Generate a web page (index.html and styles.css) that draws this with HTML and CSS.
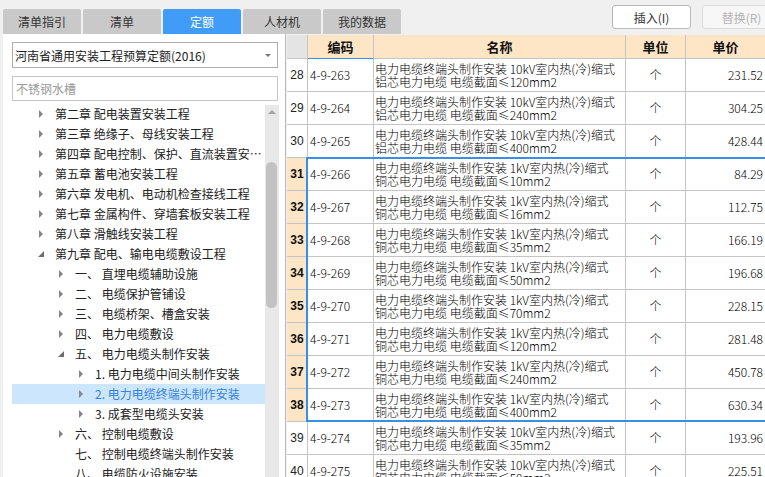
FILE: index.html
```html
<!DOCTYPE html>
<html lang="zh-CN">
<head>
<meta charset="utf-8">
<title>定额</title>
<link rel="stylesheet" href="styles.css">
</head>
<body>
<div class="app">
  <header class="topbar">
    <nav class="tabs">
      <div class="tab">清单指引</div>
      <div class="tab">清单</div>
      <div class="tab active">定额</div>
      <div class="tab">人材机</div>
      <div class="tab">我的数据</div>
    </nav>
    <div class="actions">
      <button class="btn">插入(I)</button>
      <button class="btn disabled">替换(R)</button>
    </div>
  </header>
  <main class="main">
    <aside class="left">
      <div class="select"><span class="select-text">河南省通用安装工程预算定额(2016)</span><i class="caret"></i></div>
      <div class="search">不锈钢水槽</div>
      <div class="treewrap">
        <ul class="tree">
          <li class="node l1"><i class="arr closed"></i><span class="label">第二章 配电装置安装工程</span></li>
          <li class="node l1"><i class="arr closed"></i><span class="label">第三章 绝缘子、母线安装工程</span></li>
          <li class="node l1"><i class="arr closed"></i><span class="label">第四章 配电控制、保护、直流装置安装工程</span></li>
          <li class="node l1"><i class="arr closed"></i><span class="label">第五章 蓄电池安装工程</span></li>
          <li class="node l1"><i class="arr closed"></i><span class="label">第六章 发电机、电动机检查接线工程</span></li>
          <li class="node l1"><i class="arr closed"></i><span class="label">第七章 金属构件、穿墙套板安装工程</span></li>
          <li class="node l1"><i class="arr closed"></i><span class="label">第八章 滑触线安装工程</span></li>
          <li class="node l1"><i class="arr open"></i><span class="label">第九章 配电、输电电缆敷设工程</span></li>
          <li class="node l2"><i class="arr closed"></i><span class="label">一、 直埋电缆辅助设施</span></li>
          <li class="node l2"><i class="arr closed"></i><span class="label">二、 电缆保护管铺设</span></li>
          <li class="node l2"><i class="arr closed"></i><span class="label">三、 电缆桥架、槽盒安装</span></li>
          <li class="node l2"><i class="arr closed"></i><span class="label">四、 电力电缆敷设</span></li>
          <li class="node l2"><i class="arr open"></i><span class="label">五、 电力电缆头制作安装</span></li>
          <li class="node l3"><i class="arr closed"></i><span class="label">1. 电力电缆中间头制作安装</span></li>
          <li class="node l3 selected"><i class="arr closed"></i><span class="label">2. 电力电缆终端头制作安装</span></li>
          <li class="node l3"><i class="arr closed"></i><span class="label">3. 成套型电缆头安装</span></li>
          <li class="node l2"><i class="arr closed"></i><span class="label">六、 控制电缆敷设</span></li>
          <li class="node l2"><i class="arr"></i><span class="label">七、 控制电缆终端头制作安装</span></li>
          <li class="node l2"><i class="arr"></i><span class="label">八、 电缆防火设施安装</span></li>
        </ul>
        <div class="vscroll"><div class="up"><i></i></div><div class="thumb"></div></div>
      </div>
    </aside>
    <section class="gridwrap">
      <div class="grid">
        <div class="c hd num"></div><div class="c hd hsel">编码</div><div class="c hd">名称</div><div class="c hd">单位</div><div class="c hd">单价</div>

        <div class="c n">28</div><div class="c code">4-9-263</div><div class="c name"><span>电力电缆终端头制作安装 10kV室内热(冷)缩式</span><span>铝芯电力电缆 电缆截面≤120mm2</span></div><div class="c unit">个</div><div class="c price">231.52</div>
        <div class="c n">29</div><div class="c code">4-9-264</div><div class="c name"><span>电力电缆终端头制作安装 10kV室内热(冷)缩式</span><span>铝芯电力电缆 电缆截面≤240mm2</span></div><div class="c unit">个</div><div class="c price">304.25</div>
        <div class="c n">30</div><div class="c code">4-9-265</div><div class="c name"><span>电力电缆终端头制作安装 10kV室内热(冷)缩式</span><span>铝芯电力电缆 电缆截面≤400mm2</span></div><div class="c unit">个</div><div class="c price">428.44</div>
        <div class="c n hl">31</div><div class="c code">4-9-266</div><div class="c name"><span>电力电缆终端头制作安装 1kV室内热(冷)缩式</span><span>铜芯电力电缆 电缆截面≤10mm2</span></div><div class="c unit">个</div><div class="c price">84.29</div>
        <div class="c n hl">32</div><div class="c code">4-9-267</div><div class="c name"><span>电力电缆终端头制作安装 1kV室内热(冷)缩式</span><span>铜芯电力电缆 电缆截面≤16mm2</span></div><div class="c unit">个</div><div class="c price">112.75</div>
        <div class="c n hl">33</div><div class="c code">4-9-268</div><div class="c name"><span>电力电缆终端头制作安装 1kV室内热(冷)缩式</span><span>铜芯电力电缆 电缆截面≤35mm2</span></div><div class="c unit">个</div><div class="c price">166.19</div>
        <div class="c n hl">34</div><div class="c code">4-9-269</div><div class="c name"><span>电力电缆终端头制作安装 1kV室内热(冷)缩式</span><span>铜芯电力电缆 电缆截面≤50mm2</span></div><div class="c unit">个</div><div class="c price">196.68</div>
        <div class="c n hl">35</div><div class="c code">4-9-270</div><div class="c name"><span>电力电缆终端头制作安装 1kV室内热(冷)缩式</span><span>铜芯电力电缆 电缆截面≤70mm2</span></div><div class="c unit">个</div><div class="c price">228.15</div>
        <div class="c n hl">36</div><div class="c code">4-9-271</div><div class="c name"><span>电力电缆终端头制作安装 1kV室内热(冷)缩式</span><span>铜芯电力电缆 电缆截面≤120mm2</span></div><div class="c unit">个</div><div class="c price">281.48</div>
        <div class="c n hl">37</div><div class="c code">4-9-272</div><div class="c name"><span>电力电缆终端头制作安装 1kV室内热(冷)缩式</span><span>铜芯电力电缆 电缆截面≤240mm2</span></div><div class="c unit">个</div><div class="c price">450.78</div>
        <div class="c n hl">38</div><div class="c code">4-9-273</div><div class="c name"><span>电力电缆终端头制作安装 1kV室内热(冷)缩式</span><span>铜芯电力电缆 电缆截面≤400mm2</span></div><div class="c unit">个</div><div class="c price">630.34</div>
        <div class="c n">39</div><div class="c code">4-9-274</div><div class="c name"><span>电力电缆终端头制作安装 10kV室内热(冷)缩式</span><span>铜芯电力电缆 电缆截面≤35mm2</span></div><div class="c unit">个</div><div class="c price">193.96</div>
        <div class="c n">40</div><div class="c code">4-9-275</div><div class="c name"><span>电力电缆终端头制作安装 10kV室内热(冷)缩式</span><span>铜芯电力电缆 电缆截面≤50mm2</span></div><div class="c unit">个</div><div class="c price">225.51</div>
      </div>
      <div class="selection"></div>
    </section>
  </main>
</div>
</body>
</html>
```

FILE: styles.css
```css
* { box-sizing: border-box; }
html, body { margin: 0; padding: 0; }
body {
  width: 765px;
  height: 477px;
  overflow: hidden;
  background: #f0f0f0;
  font-family: "Noto Sans CJK SC", "Microsoft YaHei", sans-serif;
  color: #333;
}
.app { display: flex; flex-direction: column; width: 765px; height: 477px; }

/* top bar */
.topbar { display: flex; align-items: flex-start; height: 34px; flex: none; }
.tabs { display: flex; gap: 2px; margin: 9px 0 0 3px; }
.tab {
  width: 78px; height: 25px;
  background: #c9c9c9;
  border-radius: 2px 2px 0 0;
  font-size: 12px; line-height: 25px;
  text-align: center; color: #333;
}
.tab.active { background: #409cf7; color: #fff; }
.actions { display: flex; gap: 11px; margin: 5px -16px 0 auto; }
.btn {
  width: 79px; height: 24px;
  background: #fff;
  border: 1px solid #b9b9b9;
  border-radius: 3px;
  font-family: "Noto Sans CJK SC", sans-serif;
  font-size: 12px; color: #333;
  padding: 0;
}
.btn.disabled { background: #f7f7f7; border-color: #dadada; color: #b4b4b4; }

/* main */
.main { display: flex; flex: 1; min-height: 0; }
.left {
  width: 283px; margin-left: 3px;
  background: #fff;
  border-right: 1px solid #b8b8b8;
  padding: 8px 0 0 9px;
  display: flex; flex-direction: column;
  flex: none;
}
.select {
  width: 266px; height: 26px;
  border: 1px solid #adadad;
  display: flex; align-items: center; justify-content: space-between;
  padding: 0 6px 0 2px;
  font-size: 12px; color: #222;
}
.caret {
  width: 0; height: 0;
  border-left: 3px solid transparent; border-right: 3px solid transparent;
  border-top: 3px solid #777;
}
.search {
  width: 266px; height: 25px; margin-top: 8px;
  border: 1px solid #c6c6c6;
  padding-left: 3px;
  font-size: 12px; line-height: 23px; color: #9a9a9a;
}
.treewrap { display: flex; margin-top: 3px; flex: 1; min-height: 0; overflow: hidden; }
.tree { list-style: none; margin: 0; padding: 0; width: 253px; flex: none; }
.node {
  height: 20px; display: flex; align-items: center;
  font-size: 12px; line-height: 18px; color: #222; white-space: nowrap;
}
.node.l1 { padding-left: 27px; }
.node.l2 { padding-left: 47px; }
.node.l3 { padding-left: 67px; }
.node.selected { background: #cce6fd; color: #3582d8; }
.arr { width: 16px; flex: none; height: 8px; position: relative; }
.arr.closed::before {
  content: ""; position: absolute; left: 0; top: 0;
  border-left: 4px solid #858585;
  border-top: 4px solid transparent; border-bottom: 4px solid transparent;
}
.arr.open::before {
  content: ""; position: absolute; left: -1px; top: 1px;
  border-bottom: 6px solid #6e6e6e;
  border-left: 6px solid transparent;
}
.label { overflow: hidden; text-overflow: ellipsis; padding-right: 2px; }
.vscroll { width: 14px; flex: none; background: #e8e8e8; margin-top: 1px; }
.up { height: 16px; display: flex; justify-content: center; padding-top: 5px; }
.up i {
  width: 0; height: 0;
  border-left: 4px solid transparent; border-right: 4px solid transparent;
  border-bottom: 4px solid #a2a2a2;
}
.thumb {
  width: 11px; height: 146px; margin: 41px 0 0 1px;
  background: #c2c2c2; border-radius: 6px;
}

/* grid */
.gridwrap {
  position: relative;
  margin: 1px 0 0 1px;
  width: 478px; flex: none;
  overflow: hidden;
  background: #c4c4c4;
}
.grid {
  display: grid;
  grid-template-columns: 20px 65px 251px 59px 79px;
  grid-template-rows: 23px;
  grid-auto-rows: 32px;
  gap: 1px;
}
.c {
  background: #fff;
  display: flex; align-items: center;
  font-size: 12px; line-height: 14px;
  color: #111; white-space: nowrap; overflow: hidden;
}
.code, .name, .unit, .price { font-weight: 300; color: #000; }
.hd { background: #fde5c6; justify-content: center; font-weight: bold; font-size: 13px; }
.hd.num { background: #e4e4e4; }
.hsel { box-shadow: 0 1px 0 #3a8ee6; }
.n { justify-content: center; font-family: "Liberation Sans", Arial, sans-serif; font-size: 12px; color: #222; }
.n.hl { background: #fde5c6; font-weight: bold; color: #111; }
.code { padding-left: 2px; }
.name { flex-direction: column; align-items: flex-start; justify-content: center; padding-left: 1px; }
.name span { display: block; line-height: 13px; }
.unit { justify-content: center; }
.price { justify-content: flex-end; padding-right: 2px; }
.selection {
  position: absolute;
  left: 19px; top: 122px;
  width: 470px; height: 265px;
  border: 2px solid #3a8ee6;
  pointer-events: none;
}
```
